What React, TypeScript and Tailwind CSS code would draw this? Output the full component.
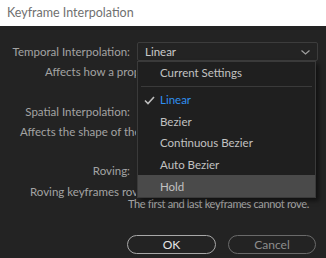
import React from "react";

const font = { fontFamily: 'Lato, "Noto Sans", sans-serif' };

function Check() {
  return (
    <svg width="11" height="9" viewBox="0 0 11 9" className="absolute left-[6px] top-[7px]">
      <path d="M1 4.5 L4 7.5 L10 1" stroke="#bdbdbd" strokeWidth="1.6" fill="none" />
    </svg>
  );
}

export default function App() {
  const items = ["Linear", "Bezier", "Continuous Bezier", "Auto Bezier", "Hold"];
  return (
    <div className="w-[326px] h-[258px] flex flex-col overflow-hidden" style={font}>
      <div className="h-[26px] bg-white flex items-center px-[7px] text-[12.5px] text-[#707070] whitespace-nowrap">
        Keyframe Interpolation
      </div>
      <div className="flex-1 bg-[#232323] relative flex flex-col text-[11.5px] text-[#a3a3a3] whitespace-nowrap">
        <div className="mt-[16px] h-[19px] flex items-center">
          <div className="w-[130px] text-right leading-none">Temporal Interpolation:</div>
          <div className="ml-[7px] w-[181px] h-[19px] border border-[#3c3c3c] rounded-[2px] flex items-center px-[7px] text-[#cacaca] relative">
            Linear
            <svg width="9" height="5" viewBox="0 0 9 5" className="absolute right-[7px] top-[7px]">
              <path d="M0.5 0.5 L4.5 4 L8.5 0.5" stroke="#a0a0a0" strokeWidth="1.2" fill="none" />
            </svg>
          </div>
        </div>
        <div className="mt-[4px] h-[14px] leading-[14px] w-[136px] overflow-hidden pl-[45px]">
          Affects how a property changes over time
        </div>
        <div className="mt-[23px] h-[19px] flex items-center">
          <div className="w-[130px] text-right leading-none">Spatial Interpolation:</div>
        </div>
        <div className="mt-[4px] h-[14px] leading-[14px] w-[136px] overflow-hidden pl-[20px]">
          Affects the shape of the path
        </div>
        <div className="mt-[25px] h-[14px] flex items-center">
          <div className="w-[130px] text-right leading-none">Roving:</div>
        </div>
        <div className="mt-[8px] leading-[12px]">
          <div className="w-[136px] overflow-hidden pl-[30px]">Roving keyframes rove in time</div>
          <div className="pl-[128px] text-[11px] tracking-[-0.35px]">The first and last keyframes cannot rove.</div>
        </div>
        <div className="mt-[25px] flex gap-[12px] pl-[127px]">
          <button className="w-[89px] h-[19px] rounded-full border border-[#a8a8a8] text-[#e6e6e6] text-[12px] leading-none flex items-center justify-center">
            OK
          </button>
          <button className="w-[88px] h-[19px] rounded-full border border-[#6a6a6a] text-[#8e8e8e] text-[12px] leading-none flex items-center justify-center">
            Cancel
          </button>
        </div>

        <div className="absolute left-[137px] top-[35px] w-[179px] h-[137px] bg-[#1f1f1f] border border-[#3a3a3a] shadow-[3px_3px_4px_rgba(0,0,0,0.5)] flex flex-col text-[#c2c2c2]">
          <div className="h-[22px] flex items-center pl-[22px]">Current Settings</div>
          <div className="mx-[3px] my-[2px] h-px bg-[#3a3a3a]"></div>
          {items.map((it, i) => (
            <div
              key={it}
              className={
                "relative h-[22px] flex items-center pl-[22px] " +
                (i === 0 ? "text-[#2f8ff0] " : "") +
                (i === 4 ? "bg-[#4a4a4a]" : "")
              }
            >
              {i === 0 && <Check />}
              {it}
            </div>
          ))}
        </div>
      </div>
    </div>
  );
}
